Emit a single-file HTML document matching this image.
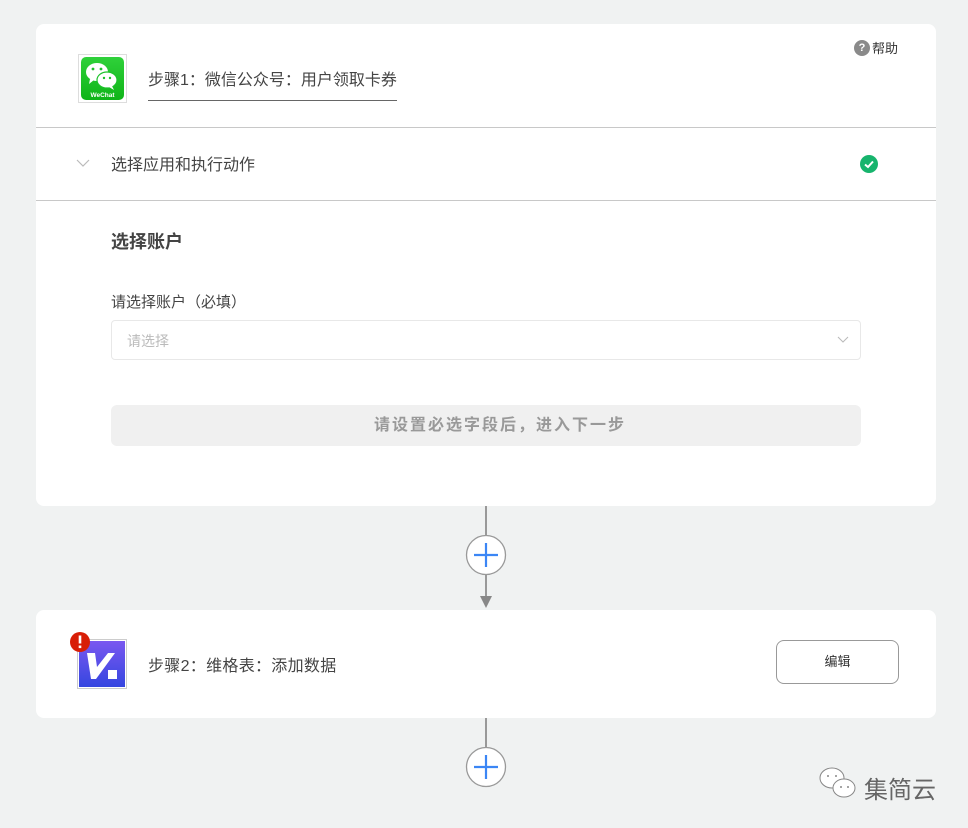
<!DOCTYPE html>
<html><head><meta charset="utf-8"><style>
*{box-sizing:border-box;margin:0;padding:0}
body{width:968px;height:828px;background:#f0f2f2;font-family:"Liberation Sans","Noto Sans CJK SC",sans-serif;position:relative;overflow:hidden;color:#333}
.card{position:absolute;left:36px;width:900px;background:#fff;border-radius:8px}
.abs{position:absolute}
</style></head><body>
<div class="card" style="top:24px;height:482px">
  <div class="abs" style="left:42px;top:30px;width:49px;height:49px;border:1px solid #ddd;padding:2px">
    <div style="width:43px;height:43px;background:linear-gradient(#2fd13a,#0fb418);border-radius:5px;position:relative">
      <svg width="43" height="43" viewBox="0 0 43 43">
        <ellipse cx="16" cy="15" rx="11" ry="9" fill="#fff"/>
        <path d="M9 22 L8 27 L13 23Z" fill="#fff"/>
        <ellipse cx="26" cy="23" rx="10" ry="8" fill="#fff" stroke="#1cc22a" stroke-width="1.2"/>
        <path d="M31 29 L33 33 L28 30Z" fill="#fff"/>
        <circle cx="12" cy="12" r="1.4" fill="#1cc22a"/><circle cx="20" cy="12" r="1.4" fill="#1cc22a"/>
        <circle cx="23" cy="21" r="1.2" fill="#1cc22a"/><circle cx="29" cy="21" r="1.2" fill="#1cc22a"/>
        <text x="21.5" y="40" font-size="6.5" font-weight="bold" fill="#fff" text-anchor="middle" font-family="Liberation Sans">WeChat</text>
      </svg>
    </div>
  </div>
  <div class="abs" style="left:112px;top:42px;font-size:16px;color:#444">步骤1：微信公众号：用户领取卡券</div>
  <div class="abs" style="left:112px;top:76px;width:249px;height:1px;background:#666"></div>
  <div class="abs" style="left:818px;top:14px;font-size:13px;color:#333;display:flex;align-items:center"><span style="width:16px;height:16px;border-radius:50%;background:#8a8a8a;color:#fff;font-size:11px;font-weight:bold;text-align:center;line-height:16px;margin-right:2px">?</span>帮助</div>
  <div class="abs" style="left:0;top:103px;width:900px;height:1px;background:#c8c8c8"></div>
  <svg class="abs" style="left:40px;top:134px" width="14" height="10"><path d="M1 2 L7 8 L13 2" fill="none" stroke="#bbb" stroke-width="1.2"/></svg>
  <div class="abs" style="left:75px;top:127px;font-size:16px;color:#444">选择应用和执行动作</div>
  <svg class="abs" style="left:824px;top:131px" width="18" height="18"><circle cx="9" cy="9" r="9" fill="#17b46d"/><path d="M5 9.5 L8 12 L13 6.5" fill="none" stroke="#fff" stroke-width="2"/></svg>
  <div class="abs" style="left:0;top:176px;width:900px;height:1px;background:#c8c8c8"></div>
  <div class="abs" style="left:75px;top:204px;font-size:18px;font-weight:bold;color:#444">选择账户</div>
  <div class="abs" style="left:75px;top:267px;font-size:15px;color:#444">请选择账户（必填）</div>
  <div class="abs" style="left:75px;top:296px;width:750px;height:40px;border:1px solid #e8e8e8;border-radius:4px"></div>
  <div class="abs" style="left:91px;top:307px;font-size:14px;color:#bbb">请选择</div>
  <svg class="abs" style="left:801px;top:312px" width="12" height="8"><path d="M1 1 L6 6 L11 1" fill="none" stroke="#bbb" stroke-width="1.1"/></svg>
  <div class="abs" style="left:75px;top:381px;width:750px;height:41px;background:#f0f0f0;border-radius:6px;padding-left:28px;text-align:center;line-height:41px;font-size:16px;letter-spacing:2px;font-weight:bold;color:#999">请设置必选字段后，进入下一步</div>
</div>
<div class="abs" style="left:485px;top:506px;width:2px;height:95px;background:#999"></div>
<svg class="abs" style="left:480px;top:596px" width="12" height="12"><path d="M0 0 L12 0 L6 12Z" fill="#888"/></svg>
<svg class="abs" style="left:465px;top:534px" width="42" height="42"><circle cx="21" cy="21" r="19.5" fill="#fff" stroke="#999" stroke-width="1.3"/><path d="M21 9 V33 M9 21 H33" stroke="#3b86f5" stroke-width="2.2"/></svg>
<div class="card" style="top:610px;height:108px">
  <div class="abs" style="left:41px;top:29px;width:50px;height:50px;border:1px solid #ccc;padding:1px">
    <svg width="46" height="46" viewBox="0 0 46 46"><defs><linearGradient id="g" x1="0" y1="0" x2="0" y2="1"><stop offset="0" stop-color="#7a58f0"/><stop offset="1" stop-color="#3546e0"/></linearGradient></defs><rect width="46" height="46" fill="url(#g)"/><path d="M8 12 L16 12 L18 26 L29 12 L36 12 L17 38 L12 38Z" fill="#fff"/><rect x="29" y="29" width="9" height="9" fill="#fff"/></svg>
  </div>
  <svg class="abs" style="left:33px;top:21px" width="22" height="22"><circle cx="11" cy="11" r="10" fill="#d81e06"/><rect x="9.7" y="4.5" width="2.6" height="8" fill="#fff"/><rect x="9.7" y="14.5" width="2.6" height="2.6" fill="#fff"/></svg>
  <div class="abs" style="left:112px;top:42px;font-size:16px;letter-spacing:0.3px;color:#444">步骤2：维格表：添加数据</div>
  <div class="abs" style="left:740px;top:30px;width:123px;height:44px;border:1px solid #999;border-radius:8px;text-align:center;line-height:42px;font-size:13px;color:#333">编辑</div>
</div>
<div class="abs" style="left:485px;top:718px;width:2px;height:30px;background:#999"></div>
<svg class="abs" style="left:465px;top:746px" width="42" height="42"><circle cx="21" cy="21" r="19.5" fill="#fff" stroke="#999" stroke-width="1.3"/><path d="M21 9 V33 M9 21 H33" stroke="#3b86f5" stroke-width="2.2"/></svg>
<svg class="abs" style="left:818px;top:766px" width="42" height="36"><ellipse cx="14" cy="12" rx="12" ry="10" fill="#fff" stroke="#888"/><ellipse cx="26" cy="22" rx="11" ry="9" fill="#fff" stroke="#888"/><circle cx="10" cy="10" r="1" fill="#888"/><circle cx="18" cy="10" r="1" fill="#888"/><circle cx="23" cy="21" r="1" fill="#888"/><circle cx="30" cy="21" r="1" fill="#888"/></svg>
<div class="abs" style="left:864px;top:770px;font-size:24px;color:#666">集简云</div>
</body></html>
